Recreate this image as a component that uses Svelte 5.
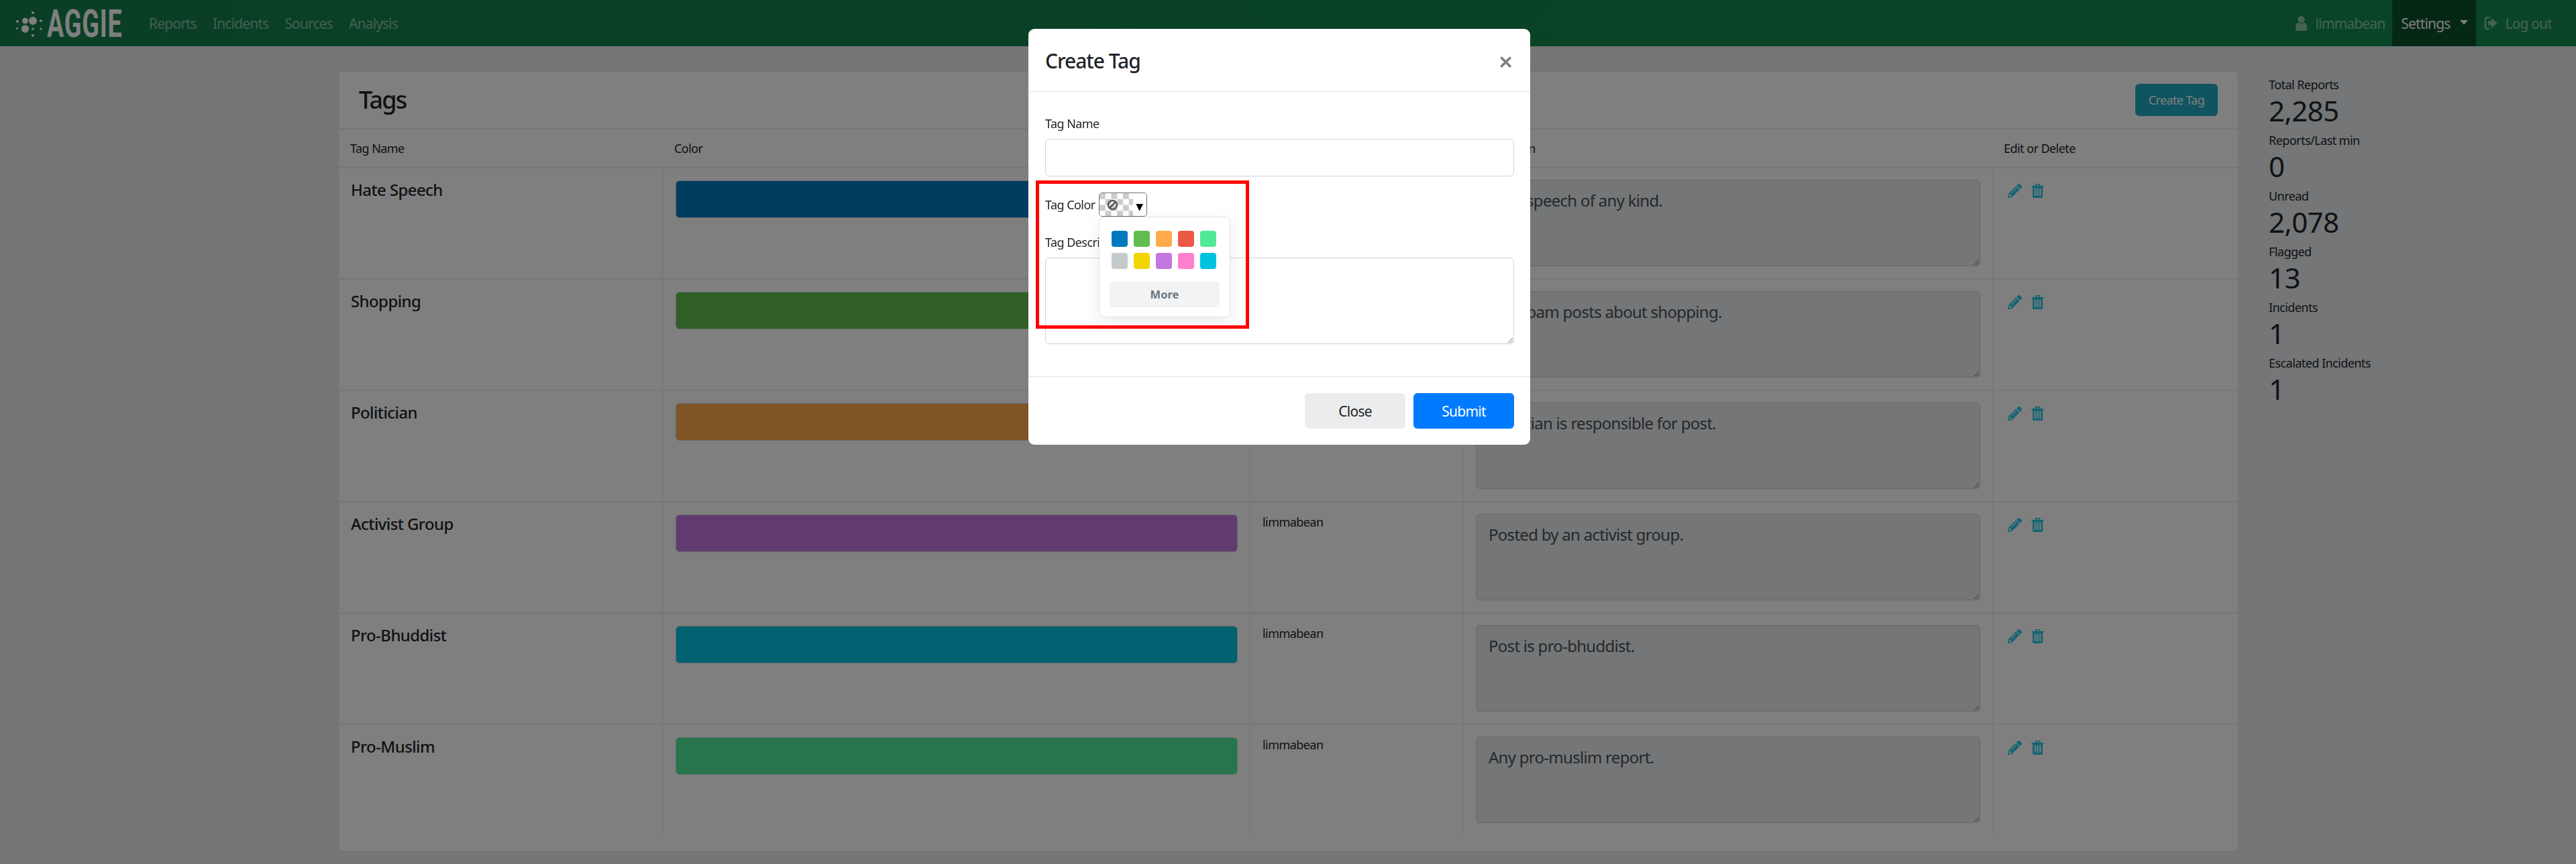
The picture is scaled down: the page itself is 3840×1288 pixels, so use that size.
<script>
const navLinks = ["Reports", "Incidents", "Sources", "Analysis"];

const tags = [
	{ name: "Hate Speech", color: "#0079bf", desc: "Hate speech of any kind." },
	{ name: "Shopping", color: "#61bd4f", desc: "Any spam posts about shopping." },
	{ name: "Politician", color: "#ffab4a", desc: "Politician is responsible for post." },
	{ name: "Activist Group", color: "#c377e0", desc: "Posted by an activist group." },
	{ name: "Pro-Bhuddist", color: "#00c2e0", desc: "Post is pro-bhuddist." },
	{ name: "Pro-Muslim", color: "#51e898", desc: "Any pro-muslim report." },
];

const stats = [
	{ label: "Total Reports", value: "2,285" },
	{ label: "Reports/Last min", value: "0" },
	{ label: "Unread", value: "2,078" },
	{ label: "Flagged", value: "13" },
	{ label: "Incidents", value: "1" },
	{ label: "Escalated Incidents", value: "1" },
];

const swatches = [
	"#0079bf", "#61bd4f", "#ffab4a", "#eb5a46", "#51e898",
	"#c4c9cc", "#f2d600", "#c377e0", "#ff80ce", "#00c2e0",
];
</script>

<div class="page">
	<nav class="navbar">
		<div class="brand">
			<svg class="brand-mark" width="46" height="52" viewBox="0 0 46 52">
				<circle cx="29" cy="22" r="6" />
				<circle cx="17.5" cy="22" r="4.5" />
				<circle cx="17.5" cy="34" r="5.7" />
				<circle cx="29" cy="34" r="1.8" />
				<circle cx="29" cy="10" r="2" />
				<circle cx="29" cy="44" r="2" />
				<circle cx="41" cy="22" r="2" />
				<circle cx="41" cy="34" r="1.7" />
				<circle cx="6" cy="23" r="2" />
				<circle cx="5.5" cy="33.5" r="1.4" />
			</svg>
			<span class="brand-name">AGGIE</span>
		</div>
		<div class="nav-links">
			{#each navLinks as link}
				<span class="nav-link">{link}</span>
			{/each}
		</div>
		<div class="nav-right">
			<span class="nav-link user">
				<svg width="17" height="23" viewBox="0 0 17 23"><circle cx="8.5" cy="6" r="5.2" /><path d="M0 15.5c0-3 2.5-4.5 4.5-4.8 2.4 1.6 5.6 1.6 8 0 2 .3 4.5 1.8 4.5 4.8V20a3 3 0 0 1-3 3H3a3 3 0 0 1-3-3z" /></svg>
				limmabean
			</span>
			<span class="nav-link active">Settings<i class="caret"></i></span>
			<span class="nav-link">
				<svg width="20" height="21" viewBox="0 0 20 21"><path d="M8 2H4.500A2.500 2.500 0 0 0 2 4.500v12A2.500 2.500 0 0 0 4.500 19H8" fill="none" stroke="currentColor" stroke-width="2.600" /><path d="M6 7.500h5V3l8.500 7.500L11 18v-4.500H6z" /></svg>
				Log out
			</span>
		</div>
	</nav>

	<main class="content">
		<section class="card">
			<header class="card-header">
				<h1>Tags</h1>
				<button class="btn-create">Create Tag</button>
			</header>
			<div class="row head">
				<div>Tag Name</div>
				<div>Color</div>
				<div>Creator</div>
				<div>Description</div>
				<div>Edit or Delete</div>
			</div>
			{#each tags as tag}
				<div class="row">
					<div class="cell name">{tag.name}</div>
					<div class="cell"><div class="bar" style="background:{tag.color}"></div></div>
					<div class="cell creator">limmabean</div>
					<div class="cell"><textarea class="desc" disabled value={tag.desc}></textarea></div>
					<div class="cell actions">
						<svg width="21" height="21" viewBox="0 0 512 512"><path d="M497.900 142.100l-46.100 46.100c-4.700 4.700-12.300 4.700-17 0l-111-111c-4.700-4.700-4.700-12.300 0-17l46.100-46.100c18.700-18.700 49.100-18.700 67.900 0l60.100 60.100c18.800 18.700 18.800 49.100 0 67.900zM284.200 99.800L21.600 362.400.4 483.900c-2.900 16.400 11.400 30.600 27.800 27.800l121.500-21.300 262.600-262.600c4.700-4.700 4.700-12.300 0-17l-111-111c-4.800-4.700-12.400-4.700-17.100 0zM124.100 339.900c-5.500-5.500-5.500-14.300 0-19.800l154-154c5.500-5.500 14.300-5.500 19.800 0s5.500 14.300 0 19.800l-154 154c-5.500 5.500-14.300 5.500-19.800 0zM88 424h48v36.300l-64.500 11.300-31.100-31.100L51.700 376H88v48z" /></svg>
						<svg width="19" height="21" viewBox="0 0 20 22"><path fill-rule="evenodd" d="M7 0h6a1 1 0 0 1 1 1v2h5a1 1 0 0 1 0 2h-1v15a2 2 0 0 1-2 2H4a2 2 0 0 1-2-2V5H1a1 1 0 0 1 0-2h5V1a1 1 0 0 1 1-1zM8 1.500V3h4V1.500zM5 7v12h2V7zM9 7v12h2V7zM13 7v12h2V7z" /></svg>
					</div>
				</div>
			{/each}
		</section>

		<aside class="stats">
			{#each stats as stat}
				<div class="stat-label">{stat.label}</div>
				<div class="stat-value">{stat.value}</div>
			{/each}
		</aside>
	</main>
</div>

<div class="backdrop"></div>

<div class="modal">
	<header class="modal-header">
		<h2>Create Tag</h2>
		<span class="close">×</span>
	</header>
	<div class="modal-body">
		<label class="field-label" for="tag-name">Tag Name</label>
		<input id="tag-name" class="field" type="text" />
		<div class="color-row">
			<span class="field-label inline">Tag Color</span>
			<div class="picker">
				<div class="picker-preview">
					<svg width="17" height="17" viewBox="0 0 17 17"><circle cx="8.500" cy="8.500" r="6.500" /><path d="M4 13L13 4" /></svg>
				</div>
				<span class="picker-arrow">▼</span>
			</div>
		</div>
		<label class="field-label" for="tag-desc">Tag Description</label>
		<textarea id="tag-desc" class="field area"></textarea>

		<div class="palette">
			<div class="swatches">
				{#each swatches as swatch}
					<span class="swatch" style="background:{swatch}"></span>
				{/each}
			</div>
			<div class="more">More</div>
		</div>
	</div>
	<footer class="modal-footer">
		<button class="btn close-btn">Close</button>
		<button class="btn submit-btn">Submit</button>
	</footer>
</div>

<div class="callout"></div>

<style>
	:global(body) {
		margin: 0;
		background: #e9ecef;
		font-family: "Noto Sans", sans-serif;
		letter-spacing: -0.035em;
		color: #212529;
		overflow: hidden;
	}
	.page {
		height: 1288px;
	}
	.navbar {
		display: flex;
		align-items: center;
		height: 69px;
		background: linear-gradient(90deg, #147e4c, #148a4e);
		font-size: 21px;
		letter-spacing: -0.04em;
	}
	.brand {
		display: flex;
		align-items: center;
		width: 187px;
		padding-left: 20px;
		box-sizing: border-box;
		flex-shrink: 0;
		color: #fff;
	}
	.brand-mark {
		fill: #fff;
		flex-shrink: 0;
	}
	.brand-name {
		display: inline-block;
		font-family: Roboto, sans-serif;
		font-weight: 700;
		font-size: 58px;
		line-height: 58px;
		letter-spacing: 0.02em;
		transform: scaleX(0.65);
		transform-origin: left center;
		margin-left: 4px;
	}
	.nav-links {
		display: flex;
		flex: 1;
		margin-left: 23px;
	}
	.nav-right {
		display: flex;
		align-items: stretch;
		height: 69px;
		padding-right: 24px;
	}
	.nav-link {
		display: flex;
		align-items: center;
		gap: 12px;
		padding: 0 12px;
		color: rgba(255, 255, 255, 0.5);
	}
	.nav-link.user {
		padding-right: 11px;
	}
	.nav-link svg {
		fill: currentColor;
	}
	.nav-link.active {
		color: #fff;
		background: #0a502a;
		padding: 0 12px 0 13px;
		gap: 0;
	}
	.caret {
		width: 0;
		height: 0;
		margin: -2px 0 0 14px;
		border-top: 7px solid #fff;
		border-left: 6px solid transparent;
		border-right: 6px solid transparent;
	}
	.content {
		display: flex;
		gap: 46px;
		padding: 37px 0 0 504px;
	}
	.card {
		width: 2833px;
		height: 1164px;
		box-sizing: border-box;
		flex-shrink: 0;
		background: #fff;
		border: 1px solid rgba(0, 0, 0, 0.125);
		border-radius: 6px;
	}
	.card-header {
		display: flex;
		align-items: center;
		justify-content: space-between;
		height: 84px;
		padding: 0 30px;
	}
	h1 {
		margin: 0;
		font-size: 36px;
		font-weight: 500;
		line-height: 1.2;
		letter-spacing: -0.05em;
	}
	.btn-create {
		width: 123px;
		height: 48px;
		border: 0;
		border-radius: 6px;
		background: #1fa8c0;
		color: #fff;
		font: inherit;
		font-size: 18px;
		letter-spacing: -0.035em;
	}
	.row {
		display: grid;
		grid-template-columns: 483px 875px 318px 789px 366px;
		height: 166px;
		border-top: 2px solid rgba(0, 0, 0, 0.07);
		box-sizing: border-box;
	}
	.row.head {
		align-items: center;
		height: 58px;
		font-size: 18px;
	}
	.row.head > div {
		padding-left: 17px;
	}
	.cell {
		padding: 18px 18px 0;
		border-left: 1px solid rgba(0, 0, 0, 0.07);
		box-sizing: border-box;
		min-width: 0;
	}
	.cell.name {
		border-left: 0;
		padding: 14px 0 0 18px;
		font-size: 24px;
		font-weight: 500;
		line-height: 36px;
		letter-spacing: -0.025em;
	}
	.cell.creator {
		padding-top: 16px;
		font-size: 18px;
		line-height: 27px;
	}
	.cell.actions {
		display: flex;
		gap: 14px;
		padding: 23px 0 0 22px;
		fill: #28c8e4;
	}
	.bar {
		height: 56px;
		box-sizing: border-box;
		border: 1px solid #ced4da;
		border-radius: 6px;
	}
	.desc {
		display: block;
		width: 100%;
		height: 129px;
		margin-top: -1px;
		box-sizing: border-box;
		padding: 13px 18px;
		background: #e9ecef;
		border: 1px solid #ced4da;
		border-radius: 6px;
		color: #495057;
		opacity: 1;
		font: inherit;
		font-size: 24px;
		line-height: 34px;
		letter-spacing: -0.03em;
	}
	.stats {
		padding-top: 7px;
		margin-left: -1px;
	}
	.stat-label {
		font-size: 18px;
		line-height: 27px;
	}
	.stat-value {
		font-size: 42px;
		line-height: 50px;
		margin-bottom: 6px;
	}
	.backdrop {
		position: fixed;
		inset: 0;
		background: rgba(0, 0, 0, 0.5);
	}
	.modal {
		position: absolute;
		left: 1533px;
		top: 43px;
		width: 748px;
		height: 620px;
		box-sizing: border-box;
		background: #fff;
		border-radius: 9px;
	}
	.modal-header {
		display: flex;
		align-items: center;
		justify-content: space-between;
		height: 94px;
		padding: 2px 25px 0;
		border-bottom: 1px solid #dee2e6;
		box-sizing: border-box;
	}
	h2 {
		margin: 0;
		font-size: 30px;
		font-weight: 500;
		letter-spacing: -0.035em;
	}
	.close {
		color: #7f7f7f;
		font-size: 38px;
		font-weight: 600;
		margin-right: 1px;
	}
	.modal-body {
		position: relative;
		display: flex;
		flex-direction: column;
		height: 424px;
		padding: 34px 24px 0 25px;
		box-sizing: border-box;
	}
	.field-label {
		font-size: 18px;
		line-height: 27px;
		margin-bottom: 9px;
	}
	.field-label.inline {
		margin: 0;
	}
	.field {
		height: 56px;
		box-sizing: border-box;
		border: 1px solid #ced4da;
		border-radius: 6px;
		background: #fff;
	}
	.field.area {
		height: 129px;
	}
	.color-row {
		display: flex;
		align-items: center;
		gap: 5px;
		height: 36px;
		margin: 24px 0 25px;
	}
	.picker {
		position: relative;
		display: flex;
		width: 72px;
		height: 36px;
		box-sizing: border-box;
		border: 1px solid #6c757d;
		border-radius: 5px;
		overflow: hidden;
		background: #fff;
	}
	.picker-preview {
		display: flex;
		align-items: center;
		justify-content: center;
		width: 50px;
		padding-right: 11px;
		box-sizing: border-box;
		background: conic-gradient(#fff 25%, #ccc 0 50%, #fff 0 75%, #ccc 0) 0 0 / 17.500px 17.500px;
	}
	.picker-preview svg {
		fill: none;
		stroke: #555;
		stroke-width: 2.500;
	}
	.picker-arrow {
		flex: 1;
		text-align: center;
		color: #000;
		font-family: "DejaVu Sans", sans-serif;
		font-size: 14px;
		line-height: 40px;
		letter-spacing: 0;
	}
	.palette {
		position: absolute;
		left: 105px;
		top: 186px;
		width: 196px;
		height: 150px;
		padding: 20px 15px 0;
		box-sizing: border-box;
		background: #fff;
		border: 1px solid #dee2e6;
		border-radius: 8px;
		box-shadow: 0 8px 24px rgba(0, 0, 0, 0.08);
	}
	.swatches {
		display: grid;
		grid-template-columns: repeat(5, 24px);
		gap: 9px;
		padding-left: 3px;
	}
	.swatch {
		height: 24px;
		border-radius: 4px;
	}
	.more {
		height: 38px;
		margin-top: 19px;
		background: #f1f3f4;
		border-radius: 4px;
		color: #6c757d;
		font-size: 16.500px;
		font-weight: 700;
		line-height: 38px;
		text-align: center;
		letter-spacing: 0;
	}
	.modal-footer {
		display: flex;
		justify-content: flex-end;
		gap: 12px;
		height: 58px;
		padding: 24px 24px 0;
		border-top: 1px solid #dee2e6;
	}
	.btn {
		width: 150px;
		height: 53px;
		border: 0;
		border-radius: 6px;
		font: inherit;
		font-size: 21px;
		letter-spacing: -0.035em;
	}
	.close-btn {
		background: #ebecee;
		color: #212529;
	}
	.submit-btn {
		background: #007bff;
		color: #fff;
	}
	.callout {
		position: absolute;
		left: 1544px;
		top: 269px;
		width: 318px;
		height: 221px;
		box-sizing: border-box;
		border: 5px solid #f00;
		pointer-events: none;
	}
</style>
